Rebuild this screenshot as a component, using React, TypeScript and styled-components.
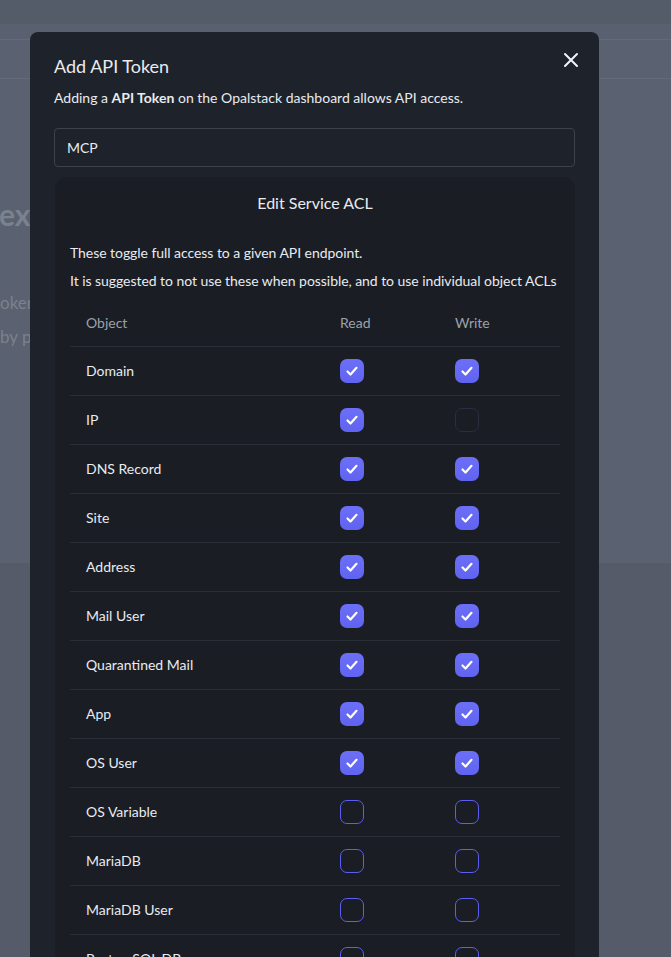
import styled, { createGlobalStyle } from 'styled-components';

const GlobalStyle = createGlobalStyle`
  html, body {
    margin: 0;
    padding: 0;
    background: #5a6170;
    font-family: Lato, "Liberation Sans", sans-serif;
    overflow: hidden;
  }
  * { box-sizing: border-box; }
`;

type AclRow = { name: string; read: boolean; write: boolean; disabled?: boolean };

const rows: AclRow[] = [
  { name: 'Domain', read: true, write: true },
  { name: 'IP', read: true, write: false, disabled: true },
  { name: 'DNS Record', read: true, write: true },
  { name: 'Site', read: true, write: true },
  { name: 'Address', read: true, write: true },
  { name: 'Mail User', read: true, write: true },
  { name: 'Quarantined Mail', read: true, write: true },
  { name: 'App', read: true, write: true },
  { name: 'OS User', read: true, write: true },
  { name: 'OS Variable', read: false, write: false },
  { name: 'MariaDB', read: false, write: false },
  { name: 'MariaDB User', read: false, write: false },
  { name: 'PostgreSQL DB', read: false, write: false },
  { name: 'PostgreSQL User', read: false, write: false },
];

const App = () => {
  return (
    <>
      <GlobalStyle />
      <PageDiv>
        <TopBar />
        <SubBar />
        <PageBody>
          <BigTitle>ext</BigTitle>
          <PageText>oken</PageText>
          <PageText>by pr</PageText>
        </PageBody>
        <PageLower />
      </PageDiv>

      <OverlayDiv>
        <ModalSec>
          <ModalHead>
            <TitleH2>Add API Token</TitleH2>
            <CloseBtn aria-label="close">
              <svg width="16" height="16" viewBox="0 0 16 16">
                <path d="M2 2 L14 14 M14 2 L2 14" stroke="#f1f4f8" strokeWidth="2" strokeLinecap="round" />
              </svg>
            </CloseBtn>
          </ModalHead>
          <IntroP>
            Adding a <b>API Token</b> on the Opalstack dashboard allows API access.
          </IntroP>
          <NameInput defaultValue="MCP" />

          <AclCard>
            <CardTitle>Edit Service ACL</CardTitle>
            <InfoP>These toggle full access to a given API endpoint.</InfoP>
            <InfoP>It is suggested to not use these when possible, and to use individual object ACLs</InfoP>

            <AclTable>
              <thead>
                <tr>
                  <HeadTh>Object</HeadTh>
                  <HeadTh>Read</HeadTh>
                  <HeadTh>Write</HeadTh>
                </tr>
              </thead>
              <tbody>
                {rows.map((r) => (
                  <tr key={r.name}>
                    <NameTd>{r.name}</NameTd>
                    <BoxTd>
                      <CheckBox checked={r.read} />
                    </BoxTd>
                    <BoxTd>
                      <CheckBox checked={r.write} disabled={r.disabled} />
                    </BoxTd>
                  </tr>
                ))}
              </tbody>
            </AclTable>
          </AclCard>
        </ModalSec>
      </OverlayDiv>
    </>
  );
};

export default App;

type CheckProps = { checked: boolean; disabled?: boolean };

const CheckBox = ({ checked, disabled }: CheckProps) => (
  <BoxSpan $checked={checked} $disabled={disabled}>
    {checked && (
      <svg width="16" height="16" viewBox="0 0 16 16">
        <path d="M3.5 8.5 L6.5 11.5 L12.5 4.8" fill="none" stroke="#fff" strokeWidth="2.2" strokeLinecap="round" strokeLinejoin="round" />
      </svg>
    )}
  </BoxSpan>
);

const PageDiv = styled.div`
  height: 957px;
  display: flex;
  flex-direction: column;
`;

const TopBar = styled.div`
  height: 40px;
  background: linear-gradient(#555c69 0 24px, #596070 24px);
  border-bottom: 1px solid #636a78;
`;

const SubBar = styled.div`
  height: 39px;
  border-bottom: 1px solid #636a78;
`;

const PageBody = styled.div`
  height: 484px;
  padding-top: 115px;
  color: #7b828f;
`;

const BigTitle = styled.div`
  font-size: 30px;
  font-weight: 700;
  line-height: 40px;
  margin-left: -1px;
  margin-bottom: 52px;
`;

const PageText = styled.div`
  font-size: 17px;
  line-height: 34px;
`;

const PageLower = styled.div`
  flex: 1;
  background: #555b68;
`;

const OverlayDiv = styled.div`
  position: fixed;
  inset: 0;
  padding: 32px 72px 0 30px;
`;

const ModalSec = styled.section`
  background: #1e232b;
  border-radius: 8px;
  padding: 21px 24px 0 24px;
  min-height: 1200px;
  color: #e8ebf0;
`;

const ModalHead = styled.div`
  display: flex;
  justify-content: space-between;
  align-items: flex-start;
`;

const TitleH2 = styled.h2`
  margin: 0;
  font-size: 18px;
  font-weight: 400;
  line-height: 26px;
`;

const CloseBtn = styled.button`
  background: none;
  border: none;
  padding: 0;
  margin-top: -1px;
  margin-right: -4px;
  width: 16px;
  height: 16px;
  display: flex;
`;

const IntroP = styled.p`
  margin: 9px 0 0 0;
  font-size: 14px;
  line-height: 20px;
  b {
    font-weight: 700;
  }
`;

const NameInput = styled.input`
  display: block;
  width: 100%;
  margin-top: 20px;
  height: 39px;
  background: #1e232b;
  border: 1px solid #3d434d;
  border-radius: 4px;
  padding: 0 12px;
  color: #e8ebf0;
  font-family: inherit;
  font-size: 14px;
  outline: none;
`;

const AclCard = styled.div`
  margin: 10px 0 0 1px;
  background: #1a1d24;
  border-radius: 12px;
  padding: 16px 15px 20px 15px;
`;

const CardTitle = styled.h3`
  margin: 0 0 30px 0;
  text-align: center;
  font-size: 16px;
  font-weight: 400;
  line-height: 20px;
`;

const InfoP = styled.p`
  margin: 0 0 8px 0;
  font-size: 14px;
  line-height: 20px;
  white-space: nowrap;
  letter-spacing: -0.05px;
`;

const AclTable = styled.table`
  width: 100%;
  border-collapse: collapse;
  margin-top: 6px;
  font-size: 14px;

  tr {
    border-bottom: 1px solid #2a2e37;
  }
`;

const HeadTh = styled.th`
  text-align: left;
  font-weight: 400;
  color: #9aa1ac;
  padding: 0 16px;
  height: 47px;

  &:nth-child(2) {
    width: 115px;
  }
  &:nth-child(3) {
    width: 121px;
  }
`;

const NameTd = styled.td`
  padding: 0 16px;
  height: 49px;
`;

const BoxTd = styled.td`
  padding: 0 16px;
  height: 49px;
  vertical-align: middle;
`;

const BoxSpan = styled.span<{ $checked: boolean; $disabled?: boolean }>`
  display: flex;
  align-items: center;
  justify-content: center;
  width: 24px;
  height: 24px;
  border-radius: 7px;
  background: ${(p) => (p.$checked ? 'linear-gradient(#6c6ff6, #6063f0)' : 'transparent')};
  border: ${(p) =>
    p.$checked ? 'none' : p.$disabled ? '1px solid #2b2d42' : '1.5px solid #5b5ef0'};
`;
